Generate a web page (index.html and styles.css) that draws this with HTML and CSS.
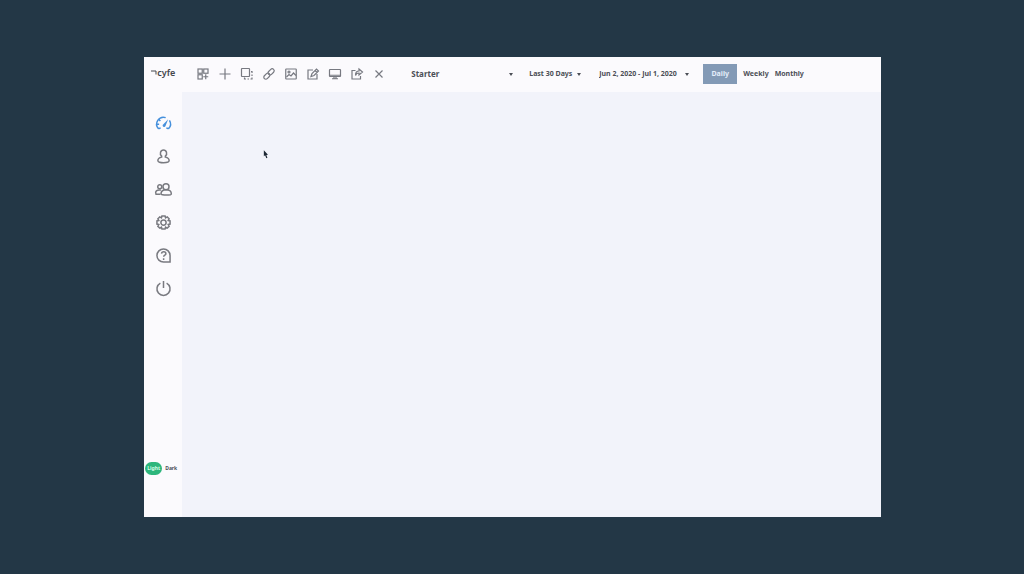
FILE: index.html
```html
<!DOCTYPE html>
<html lang="en">
<head>
<meta charset="utf-8">
<title>Cyfe dashboard</title>
<link rel="stylesheet" href="styles.css">
</head>
<body>
<div class="app">
  <header class="topbar">
    <a class="logo" href="#" aria-label="cyfe"><svg class="logo-mark" viewBox="0 0 6 5"><path d="M0 1H5V4.5"/></svg><span>cyfe</span></a>
    <div class="tools">
      <button class="tool" aria-label="Dashboards"><svg viewBox="0 0 24 24"><rect x="2" y="2" width="8.500" height="8.500"/><rect x="13.500" y="2" width="8.500" height="8.500"/><rect x="2" y="13.500" width="8.500" height="8.500"/><path d="M17.500 12.500v10M12.500 17.500h10"/></svg></button>
      <button class="tool" aria-label="Add widget"><svg viewBox="0 0 24 24"><path d="M12 1v22M1 12h22"/></svg></button>
      <button class="tool" aria-label="Duplicate"><svg viewBox="0 0 24 24"><rect x="1" y="1" width="16" height="16" rx="1"/><path d="M7 19v3h3M13 22h3M19 22h3v-3M22 16v-3M22 10V7h-2"/></svg></button>
      <button class="tool" aria-label="Link"><svg viewBox="0 0 24 24"><g transform="rotate(-45 12 12)"><rect x="-1" y="8" width="14" height="8" rx="4"/><rect x="11" y="8" width="14" height="8" rx="4"/></g></svg></button>
      <button class="tool" aria-label="Background image"><svg viewBox="0 0 24 24"><rect x="1.500" y="2" width="21" height="20" rx="1"/><circle cx="8" cy="8" r="2"/><path d="M3 18l5-5 4 3 5-6 5 5"/></svg></button>
      <button class="tool" aria-label="Edit"><svg viewBox="0 0 24 24"><path d="M12 4H2v18h18V12M8 17l2-6 9-9 4 4-9 9zM16 5l4 4"/></svg></button>
      <button class="tool" aria-label="TV mode"><svg viewBox="0 0 24 24"><rect x="1" y="3" width="22" height="14" rx="1"/><path d="M1 14.500h22M10 17v4M14 17v4M6 21.500h12"/></svg></button>
      <button class="tool" aria-label="Share"><svg viewBox="0 0 24 24"><path d="M9 5H2v17h17v-6M16 2l7 6-7 6v-4c-4 0-6 1-7 5 0-6 2-9 7-9z"/></svg></button>
      <button class="tool" aria-label="Delete"><svg viewBox="0 0 24 24"><path d="M5 5l14 14M19 5L5 19"/></svg></button>
    </div>
    <div class="picker picker-board"><select class="select" aria-label="Dashboard"><option>Starter</option></select></div>
    <div class="picker picker-period"><select class="select" aria-label="Period"><option>Last 30 Days</option></select></div>
    <div class="picker picker-range"><select class="select" aria-label="Date range"><option>Jun 2, 2020 - Jul 1, 2020</option></select></div>
    <div class="interval">
      <button class="step step-on">Daily</button>
      <button class="step">Weekly</button>
      <button class="step">Monthly</button>
    </div>
  </header>
  <div class="body">
    <aside class="sidebar">
      <nav class="nav">
        <a class="nav-item nav-on" href="#" aria-label="Dashboard"><svg viewBox="0 0 24 24"><path d="M4 20.500A11 11 0 0 1 15.500 2.600M21.500 7A11 11 0 0 1 20 20.500M1.500 13h3.500M5 6l2 2M4 20.500l3.500-1.500M20 20.500L16.500 19"/><path class="needle" d="M11 14L19.500 5 15 16.500a2.300 2.300 0 0 1-4-2.500z"/></svg></a>
        <a class="nav-item" href="#" aria-label="Profile"><svg viewBox="0 0 24 24"><path d="M12 1.500a5 5.500 0 0 1 3 9.900v1.600c4.500.8 6 2.500 6 5.500 0 2.500-4 3.500-9 3.500s-9-1-9-3.500c0-3 1.500-4.700 6-5.500v-1.600A5 5.500 0 0 1 12 1.500z"/></svg></a>
        <a class="nav-item" href="#" aria-label="Users"><svg viewBox="0 0 24 24"><circle cx="16" cy="7.500" r="4.800"/><path d="M8 19c0-4.500 3-6.500 8-6.500s8.500 2 8.500 6.500c0 2.500-16.500 2.500-16.500 0z"/><circle cx="6" cy="7.500" r="3.200"/><path d="M7 19.500H0c-2-4.500 1-7.500 8-6.500"/></svg></a>
        <a class="nav-item" href="#" aria-label="Settings"><svg viewBox="0 0 24 24"><path d="M9.500 1.500h5l.8 3 2.700-1.400 3 3-1.500 2.600 3 .8v5l-3 .8 1.500 2.700-3 3-2.700-1.500-.8 3h-5l-.8-3L6 21l-3-3 1.500-2.700-3-.8v-5l3-.8L3 6.100l3-3 2.700 1.400z"/><circle cx="12" cy="12" r="4.200"/></svg></a>
        <a class="nav-item" href="#" aria-label="Help"><svg viewBox="0 0 24 24"><path d="M22.500 22.500H12A10.500 10.500 0 1 1 22.500 12zM8.800 9c.3-4 7-4 7 0 0 2.500-3.500 2.500-3.500 5M12.200 16.500v2.500"/></svg></a>
        <a class="nav-item" href="#" aria-label="Log out"><svg viewBox="0 0 24 24"><path d="M7 3.300A10.500 10.500 0 1 0 17 3.300M12 0v11"/></svg></a>
      </nav>
      <div class="theme" role="radiogroup" aria-label="Theme">
        <label class="theme-option"><input class="theme-input" type="radio" name="theme" checked><span class="theme-name">Light</span></label>
        <label class="theme-option"><input class="theme-input" type="radio" name="theme"><span class="theme-name">Dark</span></label>
      </div>
    </aside>
    <main class="canvas">
      <svg class="cursor" viewBox="0 0 6 10"><path d="M1 0v7l1.500-1L4 9.500l1.300-.6L4 5.500l2-.3z"/></svg>
    </main>
  </div>
</div>
</body>
</html>
```
FILE: styles.css
```css
* { box-sizing: border-box; }
body {
  margin: 0;
  min-height: 100vh;
  padding-left: 1px;
  display: flex;
  align-items: center;
  justify-content: center;
  background: #233746;
  color: #4b4e56;
  font-family: "Noto Sans", "Open Sans", sans-serif;
}
button, select { font: inherit; color: inherit; border: 0; padding: 0; background: none; }
svg { display: block; fill: none; stroke: currentColor; overflow: visible; }
.app {
  width: 72%;
  min-height: 80vh;
  display: flex;
  flex-direction: column;
  background: #fbfafd;
}
.topbar {
  display: flex;
  align-items: center;
  min-height: 35px;
  padding-bottom: 2px;
  font-size: 7px;
  font-weight: 700;
  white-space: nowrap;
}
.logo {
  display: flex;
  align-items: center;
  width: 48px;
  padding-left: 7px;
  padding-bottom: 2px;
  color: #45474d;
  font: 600 9px/12px "Noto Sans", sans-serif;
  text-decoration: none;
}
.logo-mark { width: 6px; height: 5px; }
.tools { display: flex; color: #777981; }
.tool { width: 22px; height: 22px; display: grid; place-items: center; }
.tool svg { width: 12px; height: 12px; stroke-width: 2.4; }
.picker { position: relative; }
.picker::after {
  content: "";
  position: absolute;
  right: 0;
  top: 50%;
  margin-top: -1px;
  border: 2px solid transparent;
  border-top: 3px solid #4b4e56;
  border-bottom: 0;
}
.select { appearance: none; display: block; width: 100%; height: 16px; line-height: 16px; }
.picker-board { width: 102px; margin-left: 21px; font-size: 8px; }
.picker-period { width: 52px; margin-left: 16px; }
.picker-range { width: 90px; margin-left: 18px; }
.interval { display: flex; align-items: center; gap: 6px; margin-left: 14px; }
.step { height: 20px; }
.step-on { width: 34px; background: #839ab6; color: #e4edfa; }
.body { flex: 1; display: flex; }
.sidebar {
  width: 38px;
  display: flex;
  flex-direction: column;
  justify-content: space-between;
  padding: 15px 0 42px;
}
.nav { display: flex; flex-direction: column; align-items: center; color: #797a80; }
.nav-item { height: 33px; display: grid; place-items: center; color: inherit; }
.nav-item svg { width: 15px; height: 15px; stroke-width: 2.4; }
.nav-on { color: #4690dc; }
.needle { fill: currentColor; stroke: none; }
.theme {
  display: flex;
  align-items: center;
  gap: 3px;
  padding-left: 1px;
  font-size: 5px;
  font-weight: 700;
  line-height: 13px;
}
.theme-option { position: relative; }
.theme-input { position: absolute; inset: 0; margin: 0; opacity: 0; }
.theme-name { display: block; }
.theme-input:checked + .theme-name {
  width: 17px;
  border-radius: 7px;
  background: #2db67c;
  color: #d6ffe9;
  text-align: center;
}
.canvas { flex: 1; position: relative; background: #f2f3fa; }
.cursor { position: absolute; left: 81px; top: 58px; width: 5px; height: 9px; fill: #1d2733; stroke: none; }
```
